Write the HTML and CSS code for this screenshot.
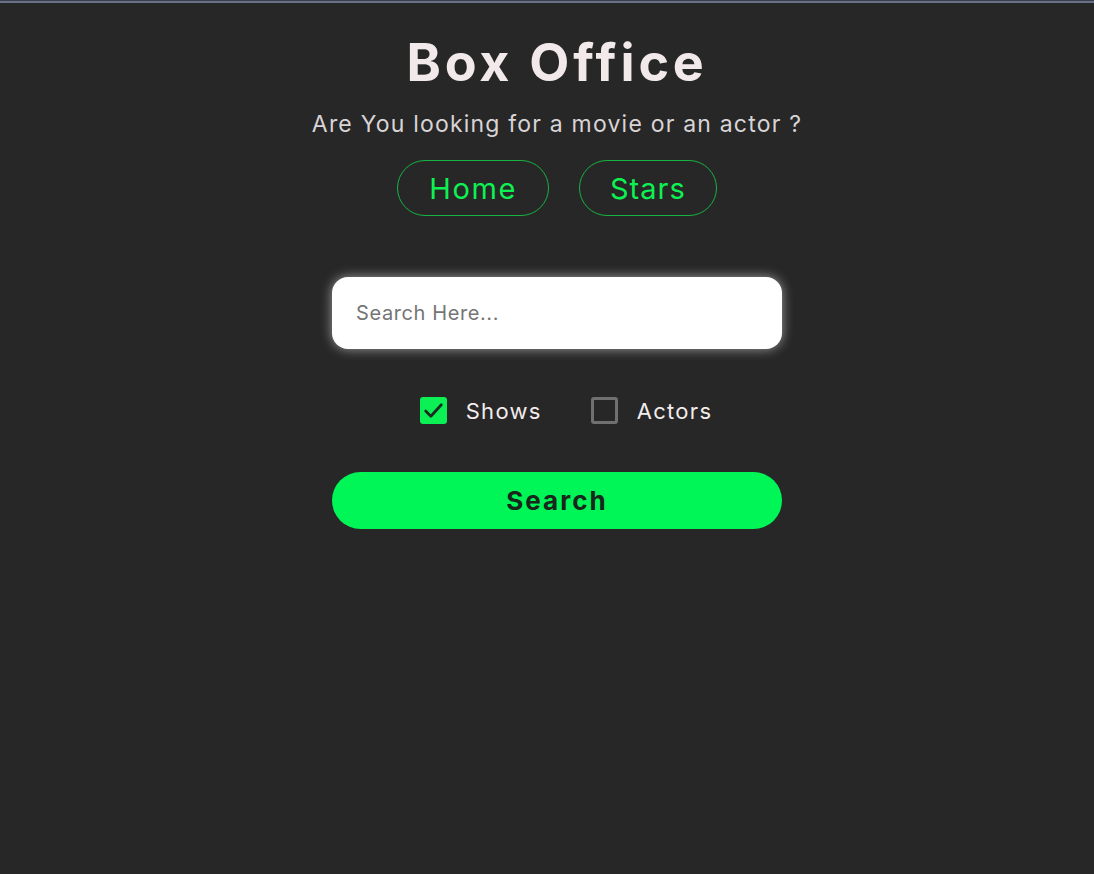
FILE: index.html
```html
<!DOCTYPE html>
<html lang="en">
<head>
<meta charset="utf-8">
<title>Box Office</title>
<link rel="stylesheet" href="styles.css">
</head>
<body>
<div class="topline"></div>
<main class="page">
  <header class="header">
    <h1 class="title">Box Office</h1>
    <p class="subtitle">Are You looking for a movie or an actor ?</p>
    <nav class="nav">
      <a class="nav-link" href="#">Home</a>
      <a class="nav-link" href="#">Stars</a>
    </nav>
  </header>
  <form class="search">
    <input class="search-input" type="text" placeholder="Search Here...">
    <div class="options">
      <label class="option">
        <span class="box box-checked">
          <svg viewBox="0 0 24 24" width="25" height="25"><path d="M4.5 12.5l5 5L19.5 6.5" fill="none" stroke="#1d2a20" stroke-width="2.6" stroke-linecap="round" stroke-linejoin="round"/></svg>
        </span>
        <span class="option-label">Shows</span>
      </label>
      <label class="option">
        <span class="box"></span>
        <span class="option-label">Actors</span>
      </label>
    </div>
    <button class="search-btn" type="button">Search</button>
  </form>
</main>
</body>
</html>
```
FILE: styles.css
```css
html, body {
  margin: 0;
  padding: 0;
  background: #272727;
  height: 100%;
}
body {
  font-family: "Inter", "Open Sans", sans-serif;
  color: #f0e8ea;
}
.topline {
  height: 1px;
  background: #3a3f4a;
  border-bottom: 2px solid #687186;
}
.page {
  padding-left: 20px;
  display: flex;
  flex-direction: column;
  align-items: center;
}
.header {
  display: flex;
  flex-direction: column;
  align-items: center;
}
.title {
  margin: 28px 0 0;
  font-size: 52px;
  line-height: 64px;
  font-weight: 700;
  letter-spacing: 3.8px;
  color: #f2e9ea;
}
.subtitle {
  margin: 15px 0 0;
  font-size: 23px;
  line-height: 28px;
  letter-spacing: 1.2px;
  color: #d9d4d6;
}
.nav {
  margin-top: 22px;
  display: flex;
  gap: 30px;
}
.nav-link {
  display: flex;
  align-items: center;
  justify-content: center;
  height: 54px;
  padding: 0 31px;
  border: 1px solid #17b444;
  border-radius: 28px;
  color: #0ef152;
  font-size: 29px;
  letter-spacing: 1.6px;
  text-decoration: none;
}
.nav-link + .nav-link {
  padding: 0 30px;
  letter-spacing: 1px;
}
.search {
  margin-top: 61px;
  display: flex;
  flex-direction: column;
  align-items: center;
}
.search-input {
  box-sizing: border-box;
  width: 450px;
  height: 72px;
  border: none;
  border-radius: 16px;
  background: #fff;
  padding: 0 24px;
  font-family: inherit;
  font-size: 20px;
  letter-spacing: 0.6px;
  color: #333;
  box-shadow: 0 0 12px rgba(255, 255, 255, 0.55);
  outline: none;
}
.search-input::placeholder {
  color: #757575;
}
.options {
  margin-top: 48px;
  padding-left: 18px;
  display: flex;
  gap: 49px;
}
.option {
  display: flex;
  align-items: center;
  gap: 19px;
}
.box {
  box-sizing: border-box;
  width: 27px;
  height: 27px;
  border: 3px solid #707070;
  border-radius: 3px;
  display: flex;
  align-items: center;
  justify-content: center;
}
.box-checked {
  border: none;
  background: #0af055;
}
.option-label {
  font-size: 22px;
  letter-spacing: 1.3px;
  color: #f2ecec;
}
.search-btn {
  margin-top: 48px;
  width: 450px;
  height: 57px;
  border: none;
  border-radius: 29px;
  background: #00f556;
  color: #18261c;
  font-family: inherit;
  font-size: 26px;
  font-weight: 700;
  letter-spacing: 2px;
}
```
